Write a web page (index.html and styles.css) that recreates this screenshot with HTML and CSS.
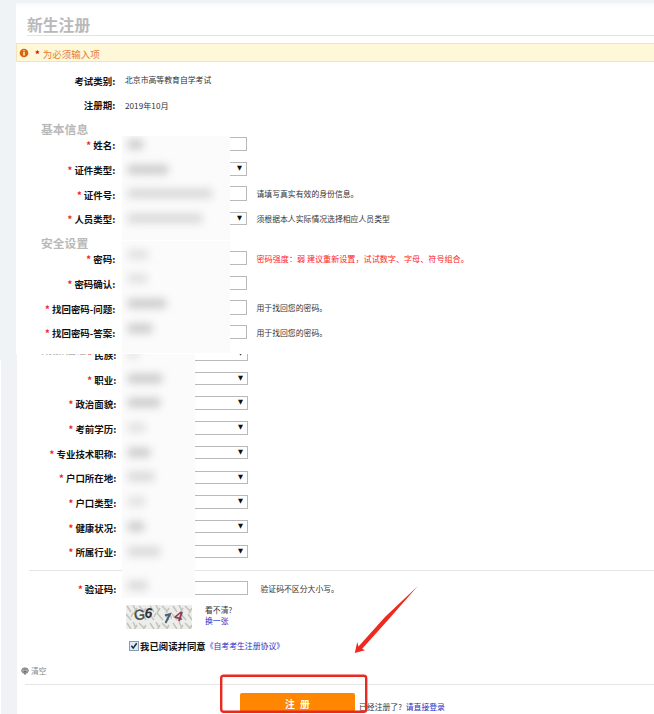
FILE: index.html
```html
<!DOCTYPE html>
<html lang="zh-CN">
<head>
<meta charset="utf-8">
<title>新生注册</title>
<link rel="stylesheet" href="styles.css">
</head>
<body>
<main class="page">
  <section class="upper">
    <h1 class="title">新生注册</h1>
    <div class="notice">
      <svg class="notice-icon" viewBox="0 0 10 10"><circle cx="5" cy="5" r="4.3" fill="#d9650f"/><path d="M5 2.2v1.1M5 4v3.6" stroke="#fff2cf" stroke-width="1.5"/></svg>
      <b class="star">*</b><span>为必须输入项</span>
    </div>
    <div class="form">
      <div class="row"><span class="label">考试类别:</span><span class="value">北京市高等教育自学考试</span></div>
      <div class="row"><span class="label">注册期:</span><span class="value date">2019年10月</span></div>
      <h2 class="heading">基本信息</h2>
      <div class="group">
        <div class="row"><label class="label"><i>*</i> 姓名:</label><div class="field"></div></div>
        <div class="row"><label class="label"><i>*</i> 证件类型:</label><div class="field select">▼</div></div>
        <div class="row"><label class="label"><i>*</i> 证件号:</label><div class="field"></div><span class="hint">请填写真实有效的身份信息。</span></div>
        <div class="row"><label class="label"><i>*</i> 人员类型:</label><div class="field select">▼</div><span class="hint">须根据本人实际情况选择相应人员类型</span></div>
        <div class="mask first">
          <span class="smudge" style="width:15px"></span><span class="smudge" style="width:40px"></span><span class="smudge pale" style="width:84px"></span><span class="smudge pale" style="width:74px"></span>
        </div>
      </div>
      <h2 class="heading">安全设置</h2>
      <div class="group">
        <div class="row"><label class="label"><i>*</i> 密码:</label><div class="field"></div><span class="hint alert">密码强度：弱 建议重新设置，试试数字、字母、符号组合。</span></div>
        <div class="row"><label class="label"><i>*</i> 密码确认:</label><div class="field"></div></div>
        <div class="row"><label class="label"><i>*</i> 找回密码-问题:</label><div class="field"></div><span class="hint">用于找回您的密码。</span></div>
        <div class="row"><label class="label"><i>*</i> 找回密码-答案:</label><div class="field"></div><span class="hint">用于找回您的密码。</span></div>
        <div class="mask second">
          <span class="smudge faint" style="width:20px"></span><span class="smudge faint" style="width:19px"></span><span class="smudge" style="width:38px"></span><span class="smudge" style="width:24px"></span>
        </div>
      </div>
    </div>
  </section>

  <section class="lower">
    <div class="details">
      <h2 class="heading cut">附加信息</h2>
      <div class="row"><label class="label"><i>*</i> 民族:</label><div class="field select">▼</div></div>
      <div class="row"><label class="label"><i>*</i> 职业:</label><div class="field select">▼</div></div>
      <div class="row"><label class="label"><i>*</i> 政治面貌:</label><div class="field select">▼</div></div>
      <div class="row"><label class="label"><i>*</i> 考前学历:</label><div class="field select">▼</div></div>
      <div class="row"><label class="label"><i>*</i> 专业技术职称:</label><div class="field select">▼</div></div>
      <div class="row"><label class="label"><i>*</i> 户口所在地:</label><div class="field select">▼</div></div>
      <div class="row"><label class="label"><i>*</i> 户口类型:</label><div class="field select">▼</div></div>
      <div class="row"><label class="label"><i>*</i> 健康状况:</label><div class="field select">▼</div></div>
      <div class="row"><label class="label"><i>*</i> 所属行业:</label><div class="field select">▼</div></div>
    </div>
    <div class="verify">
      <div class="row code"><label class="label"><i>*</i> 验证码:</label><div class="field"></div><span class="hint">验证码不区分大小写。</span></div>
      <div class="captcha">
        <svg class="captcha-image" viewBox="0 0 66 24">
          <defs><pattern id="noise" width="23" height="17" patternUnits="userSpaceOnUse"><path d="M1 1l4 6M7 0l3 6M0 9l5 6M8 8l6 7M13 1l5 5M16 9l4 6M11 3l-3 5M5 12l2-4M20 3l-3 5M21 10l2 4" stroke="#c2c4b8" stroke-width="1.5" fill="none"/></pattern></defs>
          <rect width="66" height="24" fill="#edeeec"/><rect width="66" height="24" fill="url(#noise)"/>
          <g class="captcha-text"><text x="8" y="14.5" font-size="14" fill="#454b46" stroke="#454b46" stroke-width=".4" transform="rotate(-5 14 10)">G</text><text x="18.5" y="12.5" font-size="14" font-weight="bold" font-style="italic" fill="#30323a">6</text><path d="M39 10.5l5-1.5-4.5 9" fill="none" stroke="#4d617b" stroke-width="2"/><text x="48.5" y="16" font-size="14.5" font-weight="bold" fill="#8c3b51" transform="rotate(18 53 12)">4</text></g>
        </svg>
        <p class="refresh">看不清?<br><a>换一张</a></p>
      </div>
      <div class="agree">
        <svg class="checkbox" viewBox="0 0 10 10"><rect x=".5" y=".5" width="9" height="9" fill="#dcebfa" stroke="#7f9db9"/><path d="M2.4 4.8l1.8 2.3 3.5-4.8" fill="none" stroke="#20242b" stroke-width="1.5"/></svg>
        <b>我已阅读并同意</b><a>《自考考生注册协议》</a>
      </div>
    </div>
    <div class="clear">
      <svg class="clear-icon" viewBox="0 0 8 8"><ellipse cx="4" cy="3.6" rx="3.3" ry="2.7" fill="#bbb" stroke="#777"/><path d="M2.5 2.8h3M2.5 4.5h3M4 5v3" stroke="#666" stroke-width=".9"/></svg>
      <span>清空</span>
    </div>
    <footer class="actions">
      <button class="submit">注 册</button>
      <span class="login">已经注册了? <a>请直接登录</a></span>
    </footer>
    <div class="mask third">
      <span class="smudge faint" style="width:10px"></span><span class="smudge" style="width:34px"></span><span class="smudge" style="width:32px"></span><span class="smudge faint" style="width:17px"></span><span class="smudge" style="width:22px"></span><span class="smudge pale" style="width:26px"></span><span class="smudge faint" style="width:17px"></span><span class="smudge" style="width:16px"></span><span class="smudge pale" style="width:32px"></span>
      <span class="smudge pale last" style="width:19px"></span>
    </div>
  </section>
  <svg class="annotation" viewBox="0 0 200 134">
    <rect x="1.2" y="95.7" width="145" height="36.1" rx="2.5" fill="none" stroke="#e92a20" stroke-width="2.4"/>
    <path d="M197.6 6.2 165 37 138.5 66.5 137.2 62 134.8 73 145 70.2 142.2 68.8 168 40Z" fill="#ee2a1f"/>
  </svg>
</main>
</body>
</html>
```

FILE: styles.css
```css
* { box-sizing: border-box; }
body {
  margin: 0;
  background: #eff3f5;
  color: #333;
  font: 7.85px/12px "Noto Sans CJK SC", sans-serif;
}
h1, h2, p { margin: 0; }
a { color: #2a2ac4; }
.page {
  position: relative;
  width: 654px;
  height: 714px;
  overflow: hidden;
}
.upper {
  height: 354px;
  padding: 3px 0 0 16px;
}
.title {
  height: 33px;
  padding: 13px 0 0 11px;
  background: linear-gradient(#f8f9fa, #fff 5px);
  color: #b9b9b9;
  font-size: 15.8px;
  line-height: 18px;
  position: relative;
}
.title::after {
  content: "";
  position: absolute;
  left: 11px;
  right: 0;
  bottom: 0;
  height: 1px;
  background: #e3e3e3;
}
.notice {
  display: flex;
  align-items: center;
  height: 26px;
  border-top: 7px solid #fff;
  padding-left: 3px;
  background: #fef8d9;
  color: #e77e34;
  font-size: 9.5px;
  box-shadow: inset 1px 1px #f3e3bb, inset 0 -1px #f3e3bb;
}
.notice span { position: relative; top: 1px; }
.notice-icon { width: 10px; height: 10px; }
.star { margin: 2px 3px 0 6px; color: #e00; }
.form {
  height: 292px;
  padding-top: 5.3px;
  background: #fff;
}
.row {
  display: grid;
  grid-template-columns: 100px 125px auto;
  column-gap: 6px;
  align-items: center;
  height: 24.7px;
}
.label {
  padding: 2px .8px 0 0;
  color: #111;
  font-size: 9.45px;
  font-weight: bold;
  text-align: right;
  white-space: nowrap;
}
.label i { color: #e22; font-style: normal; }
.value { padding: 1px 0 0 3px; grid-column: 2 / 4; }
.date { font-size: 8.2px; }
.hint { padding: 1px 0 0 3.5px; white-space: nowrap; }
.alert { color: #f22; font-size: 8.1px; }
.field {
  height: 14.5px;
  border: 1px solid #b9b9b9;
  background: #fff;
}
.select {
  height: 13.5px;
  padding-right: 4px;
  color: #111;
  font: 6.5px/11px "DejaVu Sans", sans-serif;
  text-align: right;
}
.heading {
  height: 15.2px;
  padding: 5.5px 0 0 25px;
  color: #b9b9b9;
  font-size: 11.8px;
  line-height: 14px;
}
.group { position: relative; }
.mask {
  position: absolute;
  left: 106px;
  width: 108px;
  padding-left: 4px;
  background: #fbfbfb;
  overflow: hidden;
}
.first { top: 4px; height: 104px; }
.second { top: -5px; height: 112px; padding-top: 9px; }
.third { top: 0; left: 105px; width: 73px; height: 244px; }
.smudge {
  display: block;
  height: 9px;
  margin: 0 0 15.7px 2px;
  background: #c8c8c8;
  filter: blur(4px);
}
.first .smudge:first-child { margin-top: 4px; }
.third .smudge:first-child { margin-top: -5px; }
.pale { background: #d6d6d6; }
.faint { background: #dfdfdf; }
.third .last { margin-top: 25px; }
.lower {
  position: relative;
  height: 360px;
  margin-left: 1px;
  border-left: 16px solid #eff3f5;
  background: #fff;
}
.lower::before {
  content: "";
  position: absolute;
  left: -17px;
  top: 6px;
  width: 1px;
  height: 354px;
  background: #fff;
}
.details {
  height: 217px;
  overflow: hidden;
  background: linear-gradient(#e5e5e5, #e5e5e5) 12px 100% / 100% 1px no-repeat;
}
.details .row:nth-child(2) { margin-top: -12.5px; }
.cut {
  height: 0;
  padding: 0 0 0 24px;
  line-height: 0;
  position: relative;
  top: -5px;
}
.verify { height: 89px; }
.code { height: 34px; }
.code .hint { padding-left: 6.5px; }
.captcha {
  display: flex;
  height: 24px;
  padding-left: 109px;
}
.captcha-image { width: 66px; height: 24px; }
.captcha-text { font-family: "Liberation Sans", sans-serif; }
.refresh { margin: 0 0 0 13px; line-height: 10.5px; }
.agree {
  display: flex;
  align-items: center;
  height: 34px;
  padding-left: 112px;
  color: #111;
}
.agree b { margin-left: 1px; font-size: 9.4px; }
.agree a { margin-left: 0; }
.checkbox { width: 10px; height: 10px; }
.clear {
  display: flex;
  align-items: center;
  gap: 2px;
  height: 24px;
  padding: 0 0 2px 4px;
  color: #888;
}
.clear-icon { width: 8px; height: 8px; }
.actions {
  display: flex;
  margin-left: 8px;
  border-top: 1px solid #e5e5e5;
  padding: 8px 0 0 215px;
}
.submit {
  width: 115px;
  height: 19px;
  border: 0;
  border-radius: 2px 2px 0 0;
  padding: 2px 0 0;
  background: #ff8600;
  color: #fff;
  font: bold 9.8px/16px "Noto Sans CJK SC", sans-serif;
  word-spacing: 3px;
}
.login { margin: 8px 0 0 4px; white-space: nowrap; word-spacing: 2px; }
.annotation {
  position: absolute;
  left: 220px;
  top: 580px;
  width: 200px;
  height: 134px;
}
```
